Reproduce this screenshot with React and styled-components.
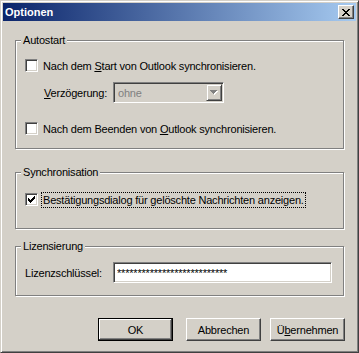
import React from "react";
import styled, { createGlobalStyle } from "styled-components";

const GlobalStyle = createGlobalStyle`
  html, body {
    margin: 0;
    padding: 0;
    background: #d4d0c8;
  }
  * { box-sizing: border-box; }
`;

const FONT = `"Liberation Sans", Arial, sans-serif`;

const Window = styled.div`
  width: 359px;
  height: 353px;
  background: #d4d0c8;
  border: 1px solid;
  border-color: #d4d0c8 #404040 #404040 #d4d0c8;
  box-shadow: inset 1px 1px 0 #ffffff, inset -1px -1px 0 #808080;
  padding: 2px;
  display: flex;
  flex-direction: column;
  font-family: ${FONT};
  font-size: 11px;
  letter-spacing: -0.2px;
  color: #000;
`;

const TitleBar = styled.div`
  height: 18px;
  flex: none;
  display: flex;
  align-items: center;
  justify-content: space-between;
  padding: 0 2px 0 2px;
  background: linear-gradient(to right, #0a246a, #a6caf0);
`;

const Title = styled.span`
  color: #fff;
  font-weight: bold;
  font-size: 11px;
  letter-spacing: 0;
  line-height: 18px;
`;

const CloseButton = styled.div`
  width: 16px;
  height: 14px;
  background: #d4d0c8;
  border: 1px solid;
  border-color: #ffffff #404040 #404040 #ffffff;
  box-shadow: inset -1px -1px 0 #808080;
  display: flex;
  align-items: center;
  justify-content: center;
  padding-right: 1px;
`;

const Body = styled.div`
  flex: 1;
  display: flex;
  flex-direction: column;
  padding: 0 12px;
`;

const GroupBox = styled.div`
  position: relative;
  margin-top: ${(p) => p.$mt}px;
  padding: ${(p) => p.$pt}px 0 ${(p) => p.$pb}px 0;
  border: 1px solid #808080;
  box-shadow: inset 1px 1px 0 #ffffff, 1px 1px 0 #ffffff;
  display: flex;
  flex-direction: column;
`;

const Legend = styled.span`
  position: absolute;
  top: -7px;
  left: 5px;
  padding: 0 2px;
  line-height: 13px;
  background: #d4d0c8;
`;

const Row = styled.div`
  display: flex;
  align-items: ${(p) => (p.$top ? "flex-start" : "center")};
  margin-top: ${(p) => p.$mt || 0}px;
  padding-left: ${(p) => p.$indent}px;
`;

const Box = styled.div`
  width: 13px;
  height: 13px;
  flex: none;
  margin-top: 1px;
  background: #fff;
  border: 1px solid;
  border-color: #808080 #ffffff #ffffff #808080;
  box-shadow: inset 1px 1px 0 #404040, inset -1px -1px 0 #d4d0c8;
  display: flex;
  align-items: center;
  justify-content: center;
`;

const CheckLabel = styled.span`
  margin-left: 3px;
  padding: 0 1px;
  line-height: 14px;
  border: 1px dotted ${(p) => (p.$focused ? "#000" : "transparent")};
  white-space: nowrap;
`;

const FieldLabel = styled.span`
  width: ${(p) => p.$w}px;
  flex: none;
  white-space: nowrap;
`;

const Combo = styled.div`
  width: 111px;
  height: 21px;
  display: flex;
  align-items: center;
  background: #d4d0c8;
  border: 1px solid;
  border-color: #808080 #ffffff #ffffff #808080;
  box-shadow: inset 1px 1px 0 #404040, inset -1px -1px 0 #d4d0c8;
  padding: 0 1px 0 4px;
`;

const ComboText = styled.span`
  flex: 1;
  color: #808080;
`;

const DropButton = styled.div`
  width: 16px;
  height: 17px;
  flex: none;
  background: #d4d0c8;
  border: 1px solid;
  border-color: #d4d0c8 #404040 #404040 #d4d0c8;
  box-shadow: inset 1px 1px 0 #ffffff, inset -1px -1px 0 #808080;
  display: flex;
  align-items: center;
  justify-content: center;
`;

const TextField = styled.input`
  width: 219px;
  height: 21px;
  background: #fff;
  border: 1px solid;
  border-color: #808080 #ffffff #ffffff #808080;
  box-shadow: inset 1px 1px 0 #404040, inset -1px -1px 0 #d4d0c8;
  padding: 0 3px;
  margin: 0;
  font-family: ${FONT};
  font-size: 11px;
  letter-spacing: -0.2px;
  color: #000;
  outline: none;
`;

const ButtonRow = styled.div`
  display: flex;
  justify-content: flex-end;
  margin-top: 22px;
  margin-right: -1px;
`;

const Button = styled.div`
  width: 75px;
  height: 23px;
  margin-left: ${(p) => p.$ml}px;
  display: flex;
  align-items: center;
  justify-content: center;
  background: #d4d0c8;
  border: 1px solid;
  border-color: ${(p) =>
    p.$default ? "#000" : "#ffffff #404040 #404040 #ffffff"};
  box-shadow: ${(p) =>
    p.$default
      ? "inset -1px -1px 0 #404040, inset 1px 1px 0 #ffffff, inset -2px -2px 0 #808080"
      : "inset -1px -1px 0 #808080, inset 1px 1px 0 #d4d0c8"};
  white-space: nowrap;
`;

const Pixels = ({ rows, color, w, h, dx = 0, dy = 0, shadow }) => {
  const rects = [];
  rows.forEach((row, y) => {
    for (let x = 0; x < row.length; x++) {
      if (row[x] === "#") rects.push([x, y]);
    }
  });
  return (
    <svg width={w} height={h} viewBox={`0 0 ${w} ${h}`} shapeRendering="crispEdges">
      {shadow &&
        rects.map(([x, y]) => (
          <rect key={`s${x}-${y}`} x={x + dx + 1} y={y + dy + 1} width="1" height="1" fill={shadow} />
        ))}
      {rects.map(([x, y]) => (
        <rect key={`${x}-${y}`} x={x + dx} y={y + dy} width="1" height="1" fill={color} />
      ))}
    </svg>
  );
};

const CHECK = [
  "......#",
  ".....##",
  "#...###",
  "##.###.",
  "#####..",
  ".###...",
  "..#....",
];

const CROSS = [
  "##....##",
  ".##..##.",
  "..####..",
  "...##...",
  "..####..",
  ".##..##.",
  "##....##",
];

const ARROW = ["#######", ".#####.", "..###..", "...#..."];

const CheckBox = ({ checked }) => (
  <Box>{checked && <Pixels rows={CHECK} color="#000" w={7} h={7} />}</Box>
);

export default function App() {
  return (
    <>
      <GlobalStyle />
      <Window>
        <TitleBar>
          <Title>Optionen</Title>
          <CloseButton>
            <Pixels rows={CROSS} color="#000" w={8} h={7} />
          </CloseButton>
        </TitleBar>
        <Body>
          <GroupBox $mt={19} $pt={17} $pb={11}>
            <Legend>Autostart</Legend>
            <Row $indent={9} $top>
              <CheckBox />
              <CheckLabel>
                Nach dem <u>S</u>tart von Outlook synchronisieren.
              </CheckLabel>
            </Row>
            <Row $indent={28} $mt={8}>
              <FieldLabel $w={69}>
                <u>V</u>erzögerung:
              </FieldLabel>
              <Combo>
                <ComboText>ohne</ComboText>
                <DropButton>
                  <Pixels rows={ARROW} color="#808080" shadow="#ffffff" w={8} h={5} />
                </DropButton>
              </Combo>
            </Row>
            <Row $indent={9} $mt={18} $top>
              <CheckBox />
              <CheckLabel>
                Nach dem Beenden von <u>O</u>utlook synchronisieren.
              </CheckLabel>
            </Row>
          </GroupBox>

          <GroupBox $mt={23} $pt={19} $pb={20}>
            <Legend>Synchronisation</Legend>
            <Row $indent={9} $top>
              <CheckBox checked />
              <CheckLabel $focused>
                Bestätigungsdialog für gelöschte Nachrichten anzeigen.
              </CheckLabel>
            </Row>
          </GroupBox>

          <GroupBox $mt={17} $pt={15} $pb={12}>
            <Legend>Lizensierung</Legend>
            <Row $indent={9}>
              <FieldLabel $w={88}>Lizenzschlüssel:</FieldLabel>
              <TextField readOnly value={"*".repeat(27)} />
            </Row>
          </GroupBox>

          <ButtonRow>
            <Button $default $ml={0}>OK</Button>
            <Button $ml={13}>Abbrechen</Button>
            <Button $ml={9}>
              Ü<u>b</u>ernehmen
            </Button>
          </ButtonRow>
        </Body>
      </Window>
    </>
  );
}
